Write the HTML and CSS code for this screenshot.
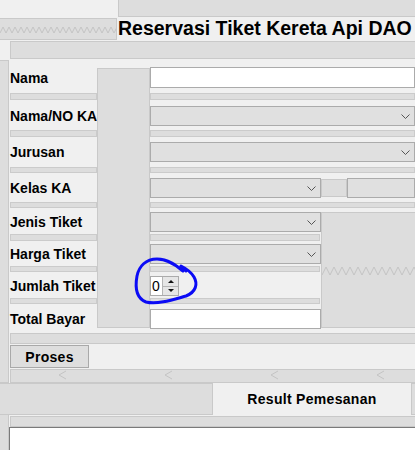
FILE: index.html
```html
<!DOCTYPE html>
<html>
<head>
<meta charset="utf-8">
<link rel="stylesheet" href="styles.css">
</head>
<body>
<div class="page">
  <div class="hdr1"><div class="ph hdr1-box"></div></div>
  <div class="hdr2">
    <div class="ph zig-box">
      <svg class="fill" viewBox="0 0 116 20" preserveAspectRatio="none"><polyline class="zig" points="0,14 3,8 6,14 9,8 12,14 15,8 18,14 21,8 24,14 27,8 30,14 33,8 36,14 39,8 42,14 45,8 48,14 51,8 54,14 57,8 60,14 63,8 66,14 69,8 72,14 75,8 78,14 81,8 84,14 87,8 90,14 93,8 96,14 99,8 102,14 105,8 108,14 111,8 114,14 117,8"/></svg>
    </div>
    <h1 class="title">Reservasi Tiket Kereta Api DAO</h1>
  </div>
  <div class="hdr3"><div class="ph hdr3-box"></div></div>

  <div class="main">
    <div class="ph side"></div>
    <div class="content">
      <div class="form">
        <div class="col-labels">
          <div class="lbl lbl-first mt7">Nama</div>
          <div class="strip strip7 mt5"></div>
          <div class="lbl mt6">Nama/NO KA</div>
          <div class="strip strip7 mt4"></div>
          <div class="lbl mt5">Jurusan</div>
          <div class="strip mt5"></div>
          <div class="lbl mt5">Kelas KA</div>
          <div class="strip mt4"></div>
          <div class="lbl mt4">Jenis Tiket</div>
          <div class="strip strip7 mt2"></div>
          <div class="lbl mt3">Harga Tiket</div>
          <div class="strip mt2"></div>
          <div class="lbl mt4">Jumlah Tiket</div>
          <div class="strip mt2"></div>
          <div class="lbl mt5">Total Bayar</div>
        </div>
        <div class="col-mid"><div class="ph mid-box"></div></div>
        <div class="col-fields">
          <div class="tf tf-first mt7"></div>
          <div class="strip strip7 mt5"></div>
          <div class="combo mt6"><svg class="chev" viewBox="0 0 9 5"><polyline points="0.5,0.5 4.5,4.5 8.5,0.5"/></svg></div>
          <div class="strip strip7 mt4"></div>
          <div class="combo mt5"><svg class="chev" viewBox="0 0 9 5"><polyline points="0.5,0.5 4.5,4.5 8.5,0.5"/></svg></div>
          <div class="strip mt5"></div>
          <div class="kelas-row mt5">
            <div class="combo combo-a"><svg class="chev" viewBox="0 0 9 5"><polyline points="0.5,0.5 4.5,4.5 8.5,0.5"/></svg></div>
            <div class="ph small-box"></div>
            <div class="combo combo-b"></div>
          </div>
          <div class="strip mt4"></div>
          <div class="lower mt4">
            <div class="sub-left">
              <div class="combo"><svg class="chev" viewBox="0 0 9 5"><polyline points="0.5,0.5 4.5,4.5 8.5,0.5"/></svg></div>
              <div class="strip strip7 strip-short mt2"></div>
              <div class="combo mt3"><svg class="chev" viewBox="0 0 9 5"><polyline points="0.5,0.5 4.5,4.5 8.5,0.5"/></svg></div>
              <div class="strip strip-short mt2"></div>
              <div class="spin-row mt4">
                <div class="spinner">
                  <div class="spin-val">0</div>
                  <div class="spin-btns">
                    <div class="spin-btn"><span class="tri-up"></span></div>
                    <div class="spin-btn spin-btn-down"><span class="tri-down"></span></div>
                  </div>
                </div>
              </div>
              <div class="strip strip-short mt2"></div>
              <div class="tf mt5"></div>
            </div>
            <div class="ph big-box">
              <svg class="fill" viewBox="0 0 93 114" preserveAspectRatio="none"><polyline class="zig" points="0,62 4,54 8,62 12,54 16,62 20,54 24,62 28,54 32,62 36,54 40,62 44,54 48,62 52,54 56,62 60,54 64,62 68,54 72,62 76,54 80,62 84,54 88,62 92,54 96,62"/></svg>
            </div>
          </div>
        </div>
      </div>
      <div class="ph bar bar-a"></div>
      <div class="btn-row"><button class="btn">Proses</button></div>
      <div class="ph bar bar-chev">
        <svg class="fill" viewBox="0 0 404 12" preserveAspectRatio="none">
          <polyline class="chv" points="55,1 48,5 55,9"/>
          <polyline class="chv" points="161,1 154,5 161,9"/>
          <polyline class="chv" points="267,1 260,5 267,9"/>
          <polyline class="chv" points="373,1 366,5 373,9"/>
        </svg>
      </div>
    </div>
  </div>

  <div class="tabs">
    <div class="ph tab-blank"></div>
    <div class="tab-active">Result Pemesanan</div>
    <div class="ph tab-right"></div>
  </div>

  <div class="bottom">
    <div class="ph side side-bottom"></div>
    <div class="bottom-content">
      <div class="ph bar bar-b"></div>
      <div class="textarea"></div>
    </div>
  </div>

  <svg class="annot" viewBox="0 0 415 450">
    <path d="M183,271 C176,265 168,259 157,259 C146,259 139,266 137,276 C135,287 136,298 146,302 C158,305 175,299 186,296 C196,292 198,284 194,277 C191,272 187,269 181,266 L186,271"/>
  </svg>
</div>
</body>
</html>
```

FILE: styles.css
```css
* { box-sizing: border-box; }
html, body { margin: 0; padding: 0; }
body {
  background: #f0f0f0;
  font-family: "Liberation Sans", Arial, sans-serif;
  color: #000;
  width: 415px;
  height: 450px;
  overflow: hidden;
}
.page { position: relative; width: 415px; height: 450px; }

.ph { background: #dddddd; border: 1px solid #c9c9c9; }
.fill { display: block; width: 100%; height: 100%; }
.zig { fill: none; stroke: #c4c4c4; stroke-width: 1; }
.chv { fill: none; stroke: #c4c4c4; stroke-width: 1; }

.mt2 { margin-top: 2px; }
.mt3 { margin-top: 3px; }
.mt4 { margin-top: 4px; }
.mt5 { margin-top: 5px; }
.mt6 { margin-top: 6px; }
.mt7 { margin-top: 7px; }

/* header */
.hdr1 { height: 18px; display: flex; }
.hdr1-box { margin-left: 118px; flex: 1; height: 17px; border-top: none; border-right: none; }

.hdr2 { height: 22px; display: flex; }
.zig-box { width: 117px; border-left: none; }
.title {
  margin: 0 0 0 1px;
  font-size: 19.5px;
  font-weight: bold;
  line-height: 21px;
  white-space: nowrap;
}

.hdr3 { margin-top: 1px; padding-left: 10px; height: 18px; display: flex; }
.hdr3-box { flex: 1; border-right: none; }

/* main */
.main { margin-top: 1px; height: 323px; display: flex; }
.side { width: 9px; border-left: none; }
.content { margin-left: 1px; width: 405px; display: flex; flex-direction: column; }

.form { display: flex; height: 269px; }
.col-labels { width: 87px; display: flex; flex-direction: column; }
.col-mid { width: 53px; }
.col-fields { width: 265px; display: flex; flex-direction: column; }

.lbl {
  height: 20px;
  display: flex;
  align-items: center;
  font-size: 14px;
  font-weight: bold;
  white-space: nowrap;
  flex: none;
}
.lbl-first { height: 21px; }

.strip { background: #dddddd; border: 1px solid #cbcbcb; height: 6px; flex: none; }
.strip7 { height: 7px; }
.strip-short { width: 170px; }

.mid-box { margin-top: 8px; height: 260px; }

.tf { background: #fff; border: 1px solid #ababab; height: 20px; flex: none; }
.tf-first { height: 21px; }

.combo {
  background: #e0e0e0;
  border: 1px solid #ababab;
  height: 20px;
  flex: none;
  display: flex;
  align-items: center;
  justify-content: flex-end;
  padding-right: 4px;
}
.chev { width: 9px; height: 5px; display: block; }
.chev polyline { fill: none; stroke: #555; stroke-width: 1; }

.kelas-row { display: flex; height: 20px; flex: none; }
.combo-a { width: 171px; }
.small-box { width: 26px; height: 18px; margin-top: 1px; }
.combo-b { flex: 1; }

.lower { display: flex; flex: none; }
.sub-left { width: 171px; display: flex; flex-direction: column; }
.big-box { width: 94px; height: 116px; border-right: none; }

.spin-row { height: 20px; flex: none; display: flex; }
.spinner {
  width: 29px;
  height: 20px;
  border: 1px solid #ababab;
  background: #fff;
  display: flex;
}
.spin-val { width: 11px; padding-left: 1px; font-size: 14px; line-height: 18px; }
.spin-btns {
  width: 16px;
  border-left: 1px solid #b5b5b5;
  background: #e6e6e6;
  display: flex;
  flex-direction: column;
}
.spin-btn { flex: 1; display: flex; align-items: center; justify-content: center; }
.spin-btn-down { border-top: 1px solid #b5b5b5; }
.tri-up { width: 0; height: 0; border-left: 3px solid transparent; border-right: 3px solid transparent; border-bottom: 3px solid #111; }
.tri-down { width: 0; height: 0; border-left: 3px solid transparent; border-right: 3px solid transparent; border-top: 3px solid #111; }

.bar { border-right: none; flex: none; }
.bar-a { margin-top: 4px; height: 11px; }
.btn-row { margin-top: 1px; height: 23px; display: flex; flex: none; }
.btn {
  width: 79px;
  height: 23px;
  background: #dedede;
  border: 1px solid #a9a9a9;
  padding: 0;
  font-family: "Liberation Sans", Arial, sans-serif;
  font-size: 14px;
  font-weight: bold;
  letter-spacing: 0.3px;
  color: #000;
}
.bar-chev { margin-top: 1px; height: 14px; }

/* tabs */
.tabs { height: 32px; display: flex; }
.tab-blank { width: 213px; border-left: none; }
.tab-active {
  width: 198px;
  display: flex;
  align-items: center;
  justify-content: center;
  font-size: 14px;
  font-weight: bold;
  letter-spacing: 0.3px;
}
.tab-right { flex: 1; border-right: none; }

/* bottom */
.bottom { height: 35px; display: flex; }
.side-bottom { border-top: none; border-bottom: none; }
.bottom-content { flex: 1; display: flex; flex-direction: column; }
.bar-b { margin: 1px 0 0 1px; height: 11px; }
.textarea { flex: 1; background: #fff; border-top: 1px solid #7a7a7a; border-left: 1px solid #7a7a7a; }

/* annotation */
.annot { position: absolute; left: 0; top: 0; width: 415px; height: 450px; pointer-events: none; }
.annot path { fill: none; stroke: #0b0bf5; stroke-width: 3; stroke-linecap: round; stroke-linejoin: round; }
```
